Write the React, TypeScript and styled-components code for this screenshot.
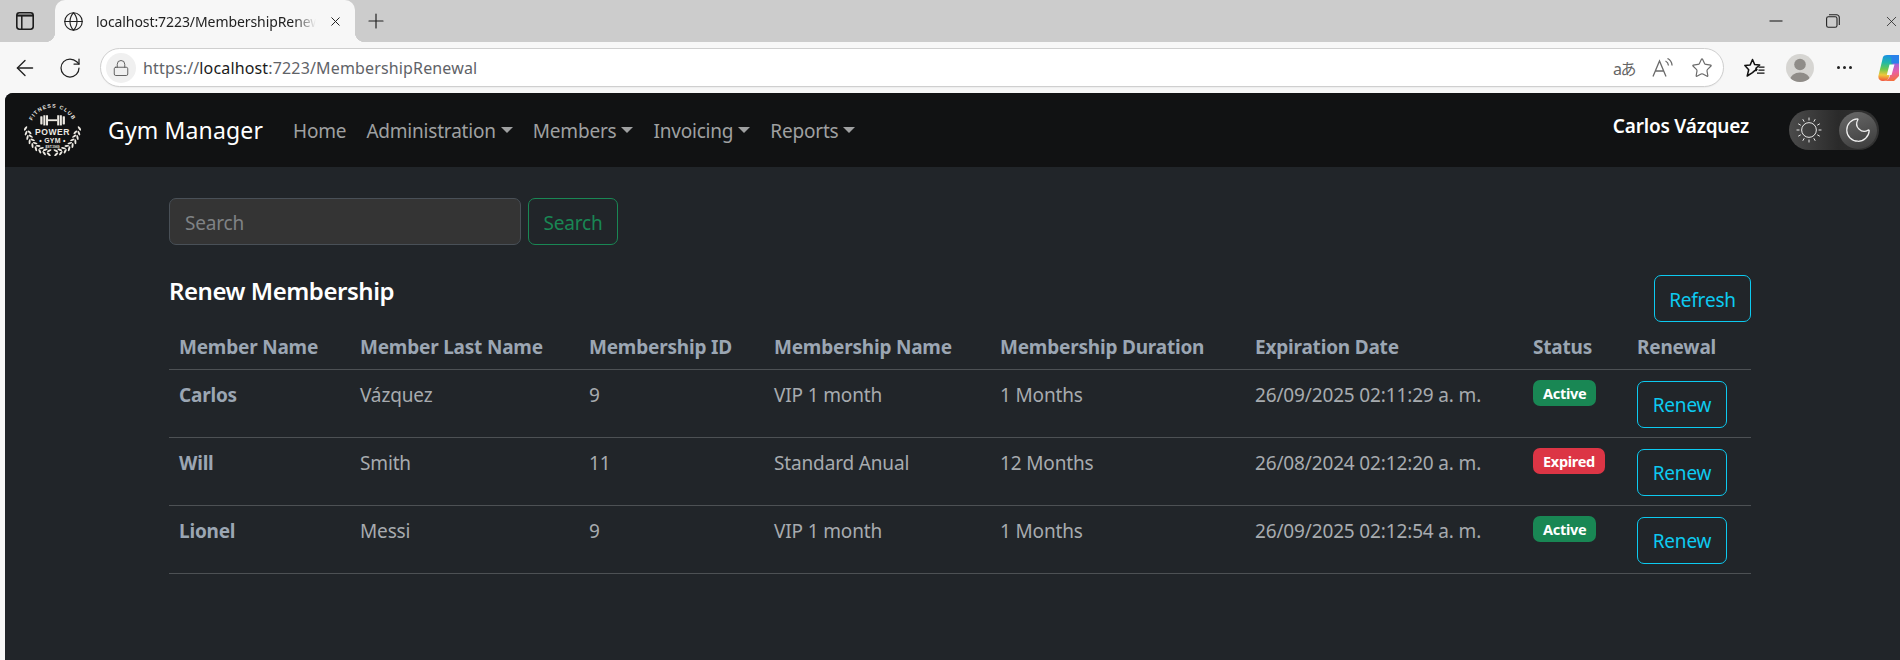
import React from "react";
import styled, { createGlobalStyle } from "styled-components";
import { ArrowLeft, Globe, Lock, Moon, Plus, RotateCw, Star, X } from "lucide-react";

const Global = createGlobalStyle`
  html, body { margin: 0; padding: 0; height: 100%; background: #f7f7f7; overflow: hidden; }
  * { box-sizing: border-box; }
  #root { height: 660px; width: 1900px; font-family: "Noto Sans", "Liberation Sans", sans-serif; }
`;

const Shell = styled.div`
  display: flex;
  flex-direction: column;
  width: 1900px;
  height: 660px;
  overflow: hidden;
`;
const TabStrip = styled.div`
  display: flex;
  align-items: flex-end;
  height: 42px;
  background: #cccccc;
  color: #1c1c1c;
`;
const StripIcon = styled.div`
  display: flex;
  align-items: center;
  justify-content: center;
  width: 55px;
  height: 42px;
  padding-right: 5px;
`;
const Tab = styled.div`
  position: relative;
  display: flex;
  align-items: center;
  width: 300px;
  height: 42px;
  padding: 0 12px 0 8px;
  gap: 12px;
  background: #f7f7f7;
  border-radius: 10px 10px 0 0;
  &::before, &::after {
    content: "";
    position: absolute;
    bottom: 0;
    width: 10px;
    height: 10px;
  }
  &::before { left: -10px; background: radial-gradient(circle at 0 0, #cccccc 10px, #f7f7f7 10.5px); }
  &::after { right: -10px; background: radial-gradient(circle at 100% 0, #cccccc 10px, #f7f7f7 10.5px); }
`;
const TabTitle = styled.span`
  flex: 1;
  font-size: 14px;
  letter-spacing: -0.08px;
  white-space: nowrap;
  overflow: hidden;
  color: #222;
  -webkit-mask-image: linear-gradient(90deg, #000 90%, transparent 100%);
  mask-image: linear-gradient(90deg, #000 90%, transparent 100%);
`;
const NewTab = styled.div`
  display: flex;
  align-items: center;
  justify-content: center;
  width: 42px;
  height: 42px;
`;
const WindowControls = styled.div`
  display: flex;
  align-items: center;
  height: 42px;
  margin-left: auto;
  gap: 43px;
`;
const Toolbar = styled.div`
  display: flex;
  align-items: center;
  height: 51px;
  padding: 0 0 0 11px;
  background: #f7f7f7;
  color: #222;
`;
const NavIcon = styled.div<{ $w: number }>`
  display: flex;
  align-items: center;
  justify-content: center;
  width: ${(p) => p.$w}px;
  flex: none;
`;
const AddressBar = styled.div`
  display: flex;
  align-items: center;
  width: 1624px;
  height: 39px;
  padding: 0 10px 0 5px;
  background: #fff;
  border: 1px solid #cfcfcf;
  border-radius: 20px;
  box-shadow: 0 1px 1px rgba(0,0,0,.04);
  flex: none;
`;
const LockBubble = styled.div`
  display: flex;
  align-items: center;
  justify-content: center;
  width: 30px;
  height: 30px;
  border-radius: 50%;
  background: #f0f0f0;
  color: #555;
`;
const Url = styled.div`
  margin-left: 7px;
  font-size: 16px;
  letter-spacing: 0.15px;
  color: #5f6368;
  white-space: nowrap;
  b { font-weight: 400; color: #1a1a1a; }
`;
const BarActions = styled.div`
  display: flex;
  align-items: center;
  gap: 17px;
  margin-left: auto;
  color: #6b6b6b;
`;
const TranslateGlyph = styled.span`
  width: 22px;
  margin-left: -4px;
  font-family: "Noto Sans", "Noto Sans CJK JP", sans-serif;
  font-size: 16px;
  letter-spacing: -1.5px;
  white-space: nowrap;
  color: #666;
`;
const RightTools = styled.div`
  display: flex;
  align-items: center;
  flex: none;
  margin-left: 20px;
`;
const Avatar = styled.div`
  width: 28px;
  height: 28px;
  margin-left: 20px;
  flex: none;
  border-radius: 50%;
  overflow: hidden;
  background: #d6d5d2;
`;
const Dots = styled.div`
  display: flex;
  gap: 3px;
  margin-left: 23px;
  span { width: 3px; height: 3px; border-radius: 50%; background: #222; }
`;
const CopilotWrap = styled.div`
  margin-left: 26px;
  flex: none;
  width: 21px;
  height: 28px;
  overflow: hidden;
`;

const PageWrap = styled.div`
  flex: 1;
  padding-left: 5px;
  background: #f7f7f7;
  min-height: 0;
`;
const Page = styled.div`
  height: 100%;
  background: #212529;
  border-radius: 8px 0 0 0;
  overflow: hidden;
  display: flex;
  flex-direction: column;
`;
const NavBar = styled.nav`
  display: flex;
  align-items: center;
  height: 74px;
  padding: 0 21px 0 19px;
  background: #111213;
`;
const Brand = styled.div`
  margin-left: 27px;
  font-size: 23px;
  letter-spacing: 0.15px;
  color: #fff;
  white-space: nowrap;
`;
const NavLinks = styled.div`
  display: flex;
  align-items: center;
  margin-left: 30px;
  gap: 20px;
`;
const NavLink = styled.a<{ $caret?: boolean }>`
  display: inline-flex;
  align-items: center;
  padding-top: 2px;
  font-size: 19px;
  letter-spacing: -0.2px;
  color: #9fa0a1;
  white-space: nowrap;
  ${(p) =>
    p.$caret
      ? `&::after {
    content: "";
    margin-left: 5px;
    margin-top: -2px;
    border-top: 6px solid #9fa0a1;
    border-left: 6px solid transparent;
    border-right: 6px solid transparent;
  }`
      : ""}
`;
const UserName = styled.div`
  margin-left: auto;
  font-size: 19px;
  font-weight: 600;
  letter-spacing: -0.2px;
  color: #fff;
  white-space: nowrap;
  transform: translateY(-4px);
`;
const Toggle = styled.div`
  display: flex;
  align-items: center;
  justify-content: space-between;
  width: 90px;
  height: 40px;
  margin-left: 40px;
  padding: 0 2px 0 7px;
  border-radius: 20px;
  background: linear-gradient(90deg, #4b4b4b 0%, #2a2a2a 55%, #333 100%);
  color: #eee;
`;
const Knob = styled.div`
  display: flex;
  align-items: center;
  justify-content: center;
  width: 38px;
  height: 37px;
  border-radius: 50%;
  background: linear-gradient(160deg, #6a6a6a, #3a3a3a);
`;
const Main = styled.main`
  padding: 31px 149px 0 164px;
`;
const SearchRow = styled.form`
  display: flex;
  gap: 7px;
`;
const SearchField = styled.div`
  display: flex;
  align-items: center;
  width: 352px;
  height: 47px;
  padding: 2px 15px 0;
  background: #343434;
  border: 1px solid #495057;
  border-radius: 7px;
  font-size: 19px;
  letter-spacing: -0.2px;
  color: #7f8285;
`;
const OutlineButton = styled.button<{ $tone: string; $w: number }>`
  display: inline-flex;
  align-items: center;
  justify-content: center;
  width: ${(p) => p.$w}px;
  height: 47px;
  padding: 2px 0 0;
  background: transparent;
  border: 1px solid ${(p) => p.$tone};
  border-radius: 7px;
  font-family: inherit;
  font-size: 19px;
  letter-spacing: -0.2px;
  color: ${(p) => p.$tone};
`;
const TitleRow = styled.div`
  display: flex;
  justify-content: space-between;
  align-items: flex-start;
  margin-top: 30px;
`;
const Title = styled.h4`
  margin: 0;
  font-size: 24px;
  line-height: 32px;
  font-weight: 600;
  letter-spacing: -0.45px;
  color: #fff;
`;
const Table = styled.table`
  width: 1582px;
  table-layout: fixed;
  border-collapse: collapse;
  font-size: 19px;
  letter-spacing: -0.15px;
  color: #a7abaf;
`;
const Th = styled.th`
  height: 47px;
  padding: 4px 10px 0;
  text-align: left;
  font-weight: 700;
  font-size: 19px;
  letter-spacing: -0.2px;
  color: #9ba6b3;
  border-bottom: 1px solid #4d5154;
  white-space: nowrap;
`;
const Tr = styled.tr`
  height: 68px;
  border-bottom: 1px solid #4d5154;
`;
const Td = styled.td<{ $strong?: boolean }>`
  padding: 11px 10px 0;
  vertical-align: top;
  white-space: nowrap;
  line-height: 28px;
  font-weight: ${(p) => (p.$strong ? 700 : 400)};
  ${(p) => (p.$strong ? "letter-spacing: -0.2px; color: #9ba6b3;" : "")}
`;
const Badge = styled.span<{ $tone: string }>`
  display: inline-flex;
  align-items: center;
  justify-content: center;
  height: 26px;
  margin-top: -1px;
  padding: 0 10px;
  border-radius: 7px;
  background: ${(p) => p.$tone};
  font-size: 14.5px;
  font-weight: 700;
  letter-spacing: -0.3px;
  color: #fff;
  vertical-align: top;
`;

const iconStroke = 1.25;
const SidebarIcon = () => (
  <svg width="18" height="18" viewBox="0 0 18 18" fill="none" stroke="#1c1c1c">
    <rect x="0.8" y="0.8" width="16.4" height="16.4" rx="2.6" strokeWidth="1.6" />
    <path d="M1 2.5h16V4.6H1z" fill="#1c1c1c" stroke="none" />
    <path d="M5.8 4v13" strokeWidth="1.5" />
  </svg>
);
const MinimizeIcon = () => (
  <svg width="14" height="14" viewBox="0 0 14 14" stroke="#222" strokeWidth="1.1"><path d="M0.5 7h13" /></svg>
);
const RestoreIcon = () => (
  <svg width="14" height="14" viewBox="0 0 14 14" fill="none" stroke="#222" strokeWidth="1.1">
    <rect x="0.6" y="2.8" width="10.4" height="10.4" rx="1.8" />
    <path d="M3 .8h7.5a2.8 2.8 0 0 1 2.8 2.8V11" />
  </svg>
);
const ReadAloud = () => (
  <svg width="22" height="20" viewBox="0 0 22 20" fill="none" stroke="#6b6b6b" strokeWidth="1.3">
    <path d="M1 18.5 7.5 3l6.5 15.5M3.3 13h8.4" />
    <path d="M13.5 3c1.7.8 2.8 2.5 3 4.5M15.5 0.5c2.6 1.2 4.3 3.7 4.6 7" />
  </svg>
);
const FavoritesIcon = () => (
  <svg width="22" height="20" viewBox="0 0 22 20" fill="none" stroke="#111" strokeWidth="1.5" strokeLinejoin="round">
    <path d="M8.5 1.5 10.7 6.6l5 .4-3.8 3.3 1 1.1-1.2 .1.6 .9-1.6.2L8.5 14.6l-5.3 3.4 1.5-6.2L.9 7.4l5.3-.5z" />
    <path d="M14.5 9.2h6M14.5 12.2h6M13 15.2h7.5" strokeWidth="1.3" />
  </svg>
);
const AvatarArt = () => (
  <svg width="28" height="28" viewBox="0 0 28 28">
    <circle cx="14" cy="10.5" r="5.8" fill="#8f8c88" />
    <ellipse cx="14" cy="26" rx="10" ry="7.5" fill="#8f8c88" />
  </svg>
);
const CopilotIcon = () => (
  <svg width="21" height="28" viewBox="0 0 21 28">
    <defs>
      <linearGradient id="cpA" x1="0.5" y1="0" x2="0.45" y2="1">
        <stop offset="0" stopColor="#1a8fe6" />
        <stop offset="0.3" stopColor="#22b8a8" />
        <stop offset="0.55" stopColor="#6cc84e" />
        <stop offset="0.78" stopColor="#f0c83c" />
        <stop offset="1" stopColor="#f2573a" />
      </linearGradient>
      <linearGradient id="cpB" x1="0.3" y1="0" x2="0.5" y2="1">
        <stop offset="0" stopColor="#8a62e8" />
        <stop offset="0.55" stopColor="#e85fa8" />
        <stop offset="1" stopColor="#f4703c" />
      </linearGradient>
    </defs>
    <path d="M14 9h7v13l-5 5H6c3-.5 5-2 6-5z" fill="url(#cpB)" />
    <path d="M5 3c.6-1.2 2-2 4-2h12v8h-6L11 23c-.8 3-3 4-6 4-3.5 0-5.2-2.5-4.5-5.5z" fill="url(#cpA)" />
    <path d="M11 1h10v8.5H14c-1 0-1-1-.5-3 .7-2.5-.5-4.5-2.5-5.5z" fill="#2a82ea" />
    <path d="M11.5 10.5h5L13.5 21H8.8z" fill="#fbfbfb" />
  </svg>
);
const SunIcon = () => {
  const rays = Array.from({ length: 12 }, (_, i) => {
    const a = (i * Math.PI) / 6;
    return (
      <line
        key={i}
        x1={12 + Math.cos(a) * 8.8}
        y1={12 + Math.sin(a) * 8.8}
        x2={12 + Math.cos(a) * 11.5}
        y2={12 + Math.sin(a) * 11.5}
      />
    );
  });
  return (
    <svg width="26" height="26" viewBox="0 0 24 24" fill="none" stroke="#ececec" strokeWidth="0.9">
      <circle cx="12" cy="12" r="6.8" />
      {rays}
    </svg>
  );
};
const Laurel = ({ side }: { side: 1 | -1 }) => {
  const leaves = Array.from({ length: 9 }, (_, i) => {
    const deg = 2 + i * 10;
    const a = (Math.PI / 180) * deg;
    const outerX = 28 + side * Math.cos(a) * 26.5;
    const outerY = 23 + Math.sin(a) * 26.5;
    const innerX = 28 + side * Math.cos(a) * 23;
    const innerY = 23 + Math.sin(a) * 23;
    return (
      <React.Fragment key={i}>
        <ellipse cx={outerX} cy={outerY} rx="2.5" ry="1" transform={`rotate(${side * (deg + 55)} ${outerX} ${outerY})`} />
        {i > 0 && (
          <ellipse cx={innerX} cy={innerY} rx="2.4" ry="0.95" transform={`rotate(${side * (deg + 125)} ${innerX} ${innerY})`} />
        )}
      </React.Fragment>
    );
  });
  return <g fill="#ece9e2">{leaves}</g>;
};
const Logo = () => (
  <svg width="57" height="52" viewBox="0 0 56 51" fill="#ece9e2" style={{ flex: "none" }}>
    <defs>
      <path id="logoArc" d="M7 19 A 22 22 0 0 1 49 19" />
    </defs>
    <text fontFamily="Liberation Sans" fontSize="5.2" fontWeight="700" letterSpacing="1">
      <textPath href="#logoArc" startOffset="50%" textAnchor="middle">FITNESS CLUB</textPath>
    </text>
    <rect x="16" y="12" width="2.2" height="8" rx=".6" />
    <rect x="19" y="11" width="2" height="10" />
    <rect x="21.6" y="11" width="2" height="10" />
    <rect x="23.6" y="15" width="9" height="1.8" />
    <rect x="32.6" y="11" width="2" height="10" />
    <rect x="35.2" y="11" width="2" height="10" />
    <rect x="38" y="12" width="2.2" height="8" rx=".6" />
    <text x="28" y="30.5" textAnchor="middle" fontFamily="Liberation Sans" fontSize="8.4" fontWeight="700" letterSpacing=".5">POWER</text>
    <text x="28" y="38" textAnchor="middle" fontFamily="Liberation Sans" fontSize="6.8" fontWeight="700" letterSpacing=".3">• GYM •</text>
    <text x="28" y="43" textAnchor="middle" fontFamily="Liberation Sans" fontSize="3.2" fontWeight="700">EST.1969</text>
    <Laurel side={1} />
    <Laurel side={-1} />
  </svg>
);

const CYAN = "#0dcaf0";
const GREEN = "#198754";
const RED = "#dc3545";
const columns = [181, 229, 185, 226, 255, 278, 104, 124];
const headers = [
  "Member Name",
  "Member Last Name",
  "Membership ID",
  "Membership Name",
  "Membership Duration",
  "Expiration Date",
  "Status",
  "Renewal",
];
const rows = [
  { first: "Carlos", last: "Vázquez", id: "9", name: "VIP 1 month", dur: "1 Months", date: "26/09/2025 02:11:29 a. m.", active: true },
  { first: "Will", last: "Smith", id: "11", name: "Standard Anual", dur: "12 Months", date: "26/08/2024 02:12:20 a. m.", active: false },
  { first: "Lionel", last: "Messi", id: "9", name: "VIP 1 month", dur: "1 Months", date: "26/09/2025 02:12:54 a. m.", active: true },
];

export default function App() {
  return (
    <Shell>
      <Global />
      <TabStrip>
        <StripIcon><SidebarIcon /></StripIcon>
        <Tab>
          <Globe size={21} strokeWidth={1.3} color="#222" />
          <TabTitle>localhost:7223/MembershipRenewal</TabTitle>
          <X size={15} strokeWidth={1.6} color="#222" />
        </Tab>
        <NewTab><Plus size={24} strokeWidth={1.2} color="#222" /></NewTab>
        <WindowControls>
          <MinimizeIcon />
          <RestoreIcon />
          <X size={17} strokeWidth={1.1} color="#222" />
        </WindowControls>
      </TabStrip>
      <Toolbar>
        <NavIcon $w={28}><ArrowLeft size={26} strokeWidth={iconStroke} /></NavIcon>
        <NavIcon $w={61}><RotateCw size={24} strokeWidth={iconStroke} /></NavIcon>
        <AddressBar>
          <LockBubble><Lock size={18} strokeWidth={1.2} /></LockBubble>
          <Url>https://<b>localhost</b>:7223/MembershipRenewal</Url>
          <BarActions>
            <TranslateGlyph>aあ</TranslateGlyph>
            <ReadAloud />
            <Star size={22} strokeWidth={1.3} />
          </BarActions>
        </AddressBar>
        <RightTools>
          <FavoritesIcon />
          <Avatar><AvatarArt /></Avatar>
          <Dots><span /><span /><span /></Dots>
          <CopilotWrap><CopilotIcon /></CopilotWrap>
        </RightTools>
      </Toolbar>
      <PageWrap>
        <Page>
          <NavBar>
            <Logo />
            <Brand>Gym Manager</Brand>
            <NavLinks>
              <NavLink>Home</NavLink>
              <NavLink $caret>Administration</NavLink>
              <NavLink $caret>Members</NavLink>
              <NavLink $caret>Invoicing</NavLink>
              <NavLink $caret>Reports</NavLink>
            </NavLinks>
            <UserName>Carlos Vázquez</UserName>
            <Toggle>
              <SunIcon />
              <Knob><Moon size={30} strokeWidth={1} /></Knob>
            </Toggle>
          </NavBar>
          <Main>
            <SearchRow>
              <SearchField>Search</SearchField>
              <OutlineButton as="div" $tone={GREEN} $w={90}>Search</OutlineButton>
            </SearchRow>
            <TitleRow>
              <Title>Renew Membership</Title>
              <OutlineButton $tone={CYAN} $w={97}>Refresh</OutlineButton>
            </TitleRow>
            <Table>
              <colgroup>
                {columns.map((w, i) => <col key={i} style={{ width: w }} />)}
              </colgroup>
              <thead>
                <tr>{headers.map((h) => <Th key={h}>{h}</Th>)}</tr>
              </thead>
              <tbody>
                {rows.map((r) => (
                  <Tr key={r.first}>
                    <Td $strong>{r.first}</Td>
                    <Td>{r.last}</Td>
                    <Td>{r.id}</Td>
                    <Td>{r.name}</Td>
                    <Td>{r.dur}</Td>
                    <Td>{r.date}</Td>
                    <Td>
                      <Badge $tone={r.active ? GREEN : RED}>{r.active ? "Active" : "Expired"}</Badge>
                    </Td>
                    <Td>
                      <OutlineButton $tone={CYAN} $w={90}>Renew</OutlineButton>
                    </Td>
                  </Tr>
                ))}
              </tbody>
            </Table>
          </Main>
        </Page>
      </PageWrap>
    </Shell>
  );
}
